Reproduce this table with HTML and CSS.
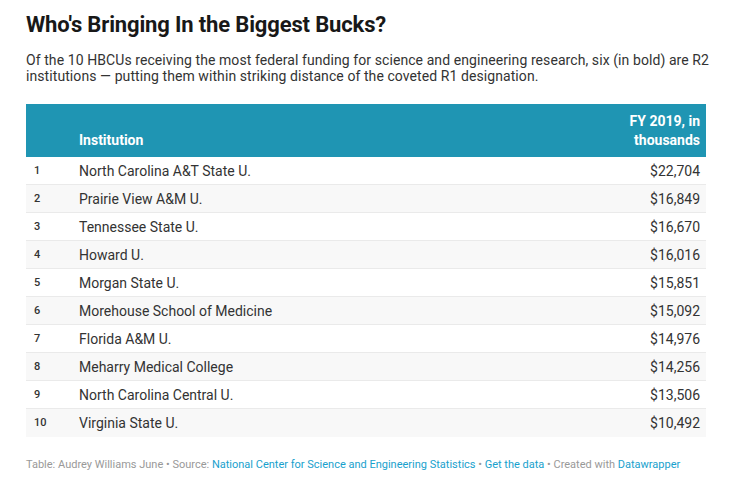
FILE: index.html
```html
<!DOCTYPE html>
<html>
<head>
<meta charset="utf-8">
<link rel="stylesheet" href="styles.css">
</head>
<body>
<div class="chart">
  <h1 class="title">Who's Bringing In the Biggest Bucks?</h1>
  <p class="desc">Of the 10 HBCUs receiving the most federal funding for science and engineering research, six (in bold) are R2 institutions — putting them within striking distance of the coveted R1 designation.</p>
  <table class="tbl">
    <colgroup>
      <col class="col-rank">
      <col class="col-name">
      <col class="col-val">
    </colgroup>
    <thead>
      <tr>
        <th class="c-rank"></th>
        <th class="c-name">Institution</th>
        <th class="c-val">FY 2019, in<br>thousands</th>
      </tr>
    </thead>
    <tbody>
      <tr><td class="c-rank">1</td><td class="c-name">North Carolina A&amp;T State U.</td><td class="c-val">$22,704</td></tr>
      <tr><td class="c-rank">2</td><td class="c-name">Prairie View A&amp;M U.</td><td class="c-val">$16,849</td></tr>
      <tr><td class="c-rank">3</td><td class="c-name">Tennessee State U.</td><td class="c-val">$16,670</td></tr>
      <tr><td class="c-rank">4</td><td class="c-name">Howard U.</td><td class="c-val">$16,016</td></tr>
      <tr><td class="c-rank">5</td><td class="c-name">Morgan State U.</td><td class="c-val">$15,851</td></tr>
      <tr><td class="c-rank">6</td><td class="c-name">Morehouse School of Medicine</td><td class="c-val">$15,092</td></tr>
      <tr><td class="c-rank">7</td><td class="c-name">Florida A&amp;M U.</td><td class="c-val">$14,976</td></tr>
      <tr><td class="c-rank">8</td><td class="c-name">Meharry Medical College</td><td class="c-val">$14,256</td></tr>
      <tr><td class="c-rank">9</td><td class="c-name">North Carolina Central U.</td><td class="c-val">$13,506</td></tr>
      <tr><td class="c-rank">10</td><td class="c-name">Virginia State U.</td><td class="c-val">$10,492</td></tr>
    </tbody>
  </table>
  <div class="footer">Table: Audrey Williams June • Source: <a class="link">National Center for Science and Engineering Statistics</a> • <a class="link">Get the data</a> • Created with <a class="link">Datawrapper</a></div>
</div>
</body>
</html>
```
FILE: styles.css
```css
html, body {
  margin: 0;
  padding: 0;
  background: #fff;
}
body {
  font-family: Roboto, "Liberation Sans", sans-serif;
  color: #333;
}
.chart {
  padding: 11px 10px 0 26px;
}
.title {
  margin: 0;
  font-size: 22px;
  font-weight: 700;
  line-height: 28px;
  color: #181818;
  letter-spacing: -0.15px;
}
.desc {
  margin: 13px 0 0 0;
  font-size: 14px;
  line-height: 16px;
  color: #333;
  letter-spacing: 0.08px;
}
.tbl {
  margin-top: 20px;
  width: 680px;
  border-collapse: collapse;
  table-layout: fixed;
}
.col-rank {
  width: 47px;
}
.col-val {
  width: 160px;
}
.tbl th {
  background: #1f95b3;
  color: #fff;
  font-size: 14px;
  font-weight: 700;
  line-height: 19px;
  text-align: left;
  vertical-align: bottom;
  padding: 8px 6px 7px 6px;
  height: 38px;
}
.tbl th.c-val {
  text-align: right;
}
.tbl td {
  height: 27px;
  padding: 0 6px;
  font-size: 14px;
  color: #333;
  border-bottom: 1px solid #eaeaea;
}
.tbl tbody tr:nth-child(even) td {
  background: #f8f8f8;
}
.tbl tbody tr:last-child td {
  border-bottom: 1px solid #f8f8f8;
}
.c-rank {
  font-size: 11px !important;
  font-weight: 500;
  padding-left: 8px !important;
}
.c-name {
  text-align: left;
}
.c-val {
  text-align: right;
}
.footer {
  margin-top: 21px;
  font-size: 11px;
  color: #999;
  line-height: 14px;
}
.link {
  color: #18a1cd;
  text-decoration: none;
}
```
